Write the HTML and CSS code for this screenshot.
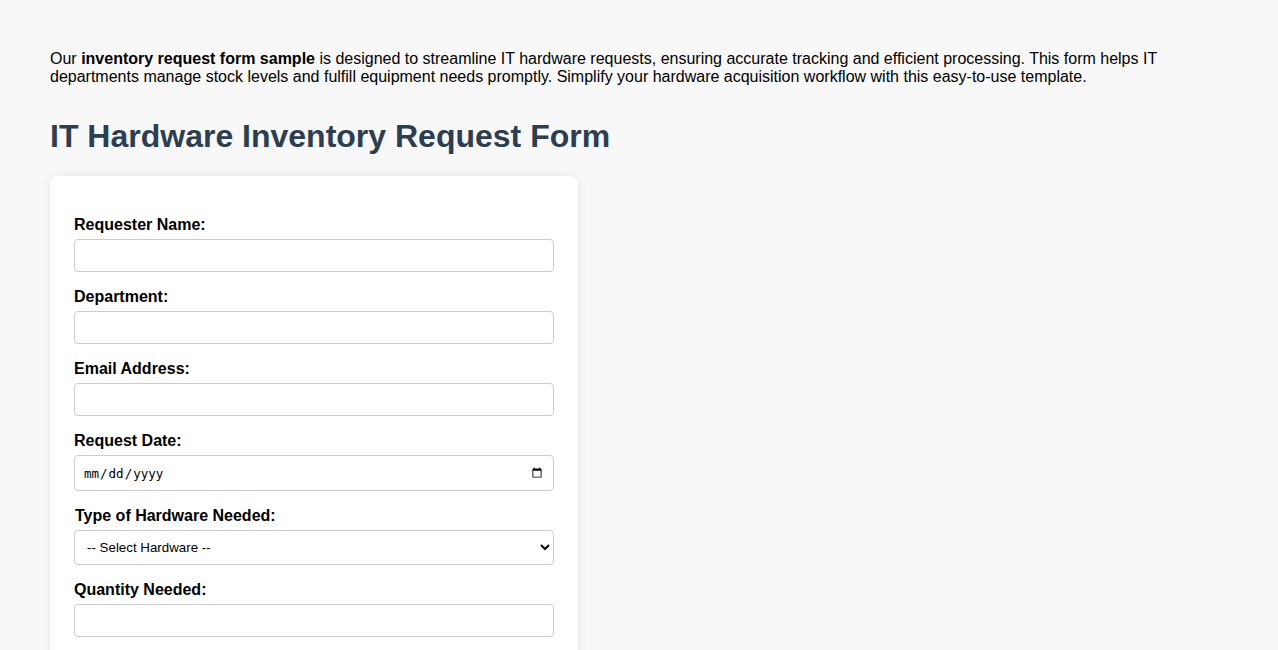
FILE: index.html
```html
<!DOCTYPE html>
<html lang="en">
<head>
  <meta charset="UTF-8" />
  <meta name="viewport" content="width=device-width, initial-scale=1.0" />
  <title>IT Hardware Inventory Request Form</title>
  <link rel="stylesheet" href="styles.css">
</head>
<body>
  <p class="intro">
    Our <strong>inventory request form sample</strong> is designed to streamline IT hardware requests, ensuring accurate tracking and efficient processing. This form helps IT departments manage stock levels and fulfill equipment needs promptly. Simplify your hardware acquisition workflow with this easy-to-use template.
  </p>

  <h1>IT Hardware Inventory Request Form</h1>

  <form class="request-form">
    <label for="requesterName">Requester Name:</label>
    <input type="text" id="requesterName">

    <label for="department">Department:</label>
    <input type="text" id="department">

    <label for="email">Email Address:</label>
    <input type="email" id="email">

    <label for="requestDate">Request Date:</label>
    <input type="date" id="requestDate">

    <label for="hardwareType" class="select-label">Type of Hardware Needed:</label>
    <select id="hardwareType">
      <option value="">-- Select Hardware --</option>
      <option>Laptop</option>
      <option>Desktop</option>
      <option>Monitor</option>
      <option>Keyboard</option>
      <option>Mouse</option>
      <option>Printer</option>
    </select>

    <label for="quantity">Quantity Needed:</label>
    <input type="number" id="quantity">

    <label for="reason">Reason for Request:</label>
    <textarea id="reason" rows="4"></textarea>
  </form>
</body>
</html>
```

FILE: styles.css
```css
body {
  margin: 0;
  padding: 34px 50px 40px;
  background-color: #f8f8f8;
  font-family: Arial, "Liberation Sans", sans-serif;
  color: #000;
}

.intro {
  margin: 16px 0 32px;
}

h1 {
  font-size: 32px;
  color: #2c3e50;
  margin: 0 0 21px;
}

.request-form {
  width: 480px;
  background: #fff;
  padding: 24px;
  border-radius: 8px;
  box-shadow: 0 0 10px rgba(0, 0, 0, 0.08);
}

.request-form label {
  display: block;
  font-weight: bold;
  margin: 16px 0 5px;
}

.request-form .select-label {
  padding-left: 1px;
}

.request-form input,
.request-form select,
.request-form textarea {
  display: block;
  width: 100%;
  box-sizing: border-box;
  padding: 8px;
  border: 1px solid #ccc;
  border-radius: 4px;
  background: #fff;
}

.request-form input[type="date"] {
  height: 36px;
  font-size: 12.5px;
}
```
